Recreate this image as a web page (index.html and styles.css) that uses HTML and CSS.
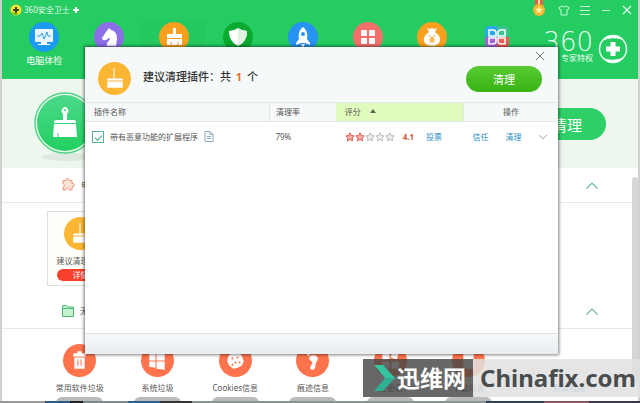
FILE: index.html
```html
<!DOCTYPE html>
<html lang="zh-CN">
<head>
    <meta charset="UTF-8">
    <title>360安全卫士</title>
    <link rel="stylesheet" href="styles.css">
</head>
<body>
    <!-- shared icons -->
    <svg class="defs" width="0" height="0">
        <symbol id="broom" viewBox="0 0 32 32">
            <path fill="#fff" d="M15 6h1v10h8v3H9v-3h6zM9 19h15v6H9z"/>
            <path fill="none" stroke="#f5b53a" d="M9 18.500h15"/>
        </symbol>
        <symbol id="up" viewBox="0 0 12 7">
            <path fill="none" stroke="#69bd9c" stroke-width="1.2" d="M.5 6.5L6 1l5.500 5.500"/>
        </symbol>
        <symbol id="star" viewBox="0 0 12 12">
            <path stroke-width="1.200" d="M6 1l1.500 3.200 3.500.5-2.600 2.400.7 3.500L6 8.900l-3.100 1.700.7-3.500L1 4.700l3.500-.5z"/>
        </symbol>
    </svg>

    <div class="window">
        <div class="header">
            <div class="titlebar">
                <div class="title">
                    <svg width="12" height="12" viewBox="0 0 12 12"><circle cx="6" cy="6" r="5.500" fill="#f3e52c"/><path d="M1 8a5.500 5.500 0 0 0 8 2z" fill="#5bbd1f"/><path d="M6 3v6M3 6h6" stroke="#3b4414" stroke-width="2"/></svg>
                    <span>360安全卫士</span>
                    <svg width="8" height="8" viewBox="0 0 8 8"><path d="M4 1v6M1 4h6" stroke="#fff" stroke-width="2"/></svg>
                </div>
                <div class="tools">
                    <svg width="14" height="18" viewBox="0 0 14 18"><path d="M3 0h8v5H3z" fill="#e9604a"/><path d="M6 0h2v5H6z" fill="#ffd9a0"/><circle cx="7" cy="10" r="6" fill="#f6b62e"/><path d="M7 6l1.200 2.600 2.800.3-2.100 1.900.6 2.800L7 12.200l-2.500 1.400.6-2.800L3 8.900l2.800-.3z" fill="#fff3a6"/></svg>
                    <svg width="12" height="12" viewBox="0 0 12 12"><path d="M4 2L1 3.500 2 6l1-.4V11h6V5.600l1 .4 1-2.500L8 2Q6 4 4 2z" fill="none" stroke="#c9f5da"/></svg>
                    <svg width="12" height="12" viewBox="0 0 12 12"><path d="M1 2.500h10M1 6.500h10M1 10.500h10" stroke="#c9f5da"/></svg>
                    <svg width="12" height="12" viewBox="0 0 12 12"><path d="M2 6.500h8" stroke="#c9f5da"/></svg>
                    <svg width="12" height="12" viewBox="0 0 12 12"><path d="M2 2l8 8M10 2l-8 8" stroke="#e6fbee" stroke-width="1.200"/></svg>
                </div>
            </div>
            <div class="menu">
                <div class="nav">
                    <a href="#" aria-label="电脑体检">
                        <svg viewBox="0 0 30 30"><circle cx="15" cy="15" r="15" fill="#1b9af0"/><rect x="6" y="7" width="18" height="13" rx="1" fill="#e9f6ff"/><path d="M12 20h6v2h3v1H9v-1h3z" fill="#fff"/><path d="M8 14h3l2-3 2 6 3-7 1 4h3" fill="none" stroke="#2d9de8"/></svg>
                        <span>电脑体检</span>
                    </a>
                    <a href="#" aria-label="木马查杀">
                        <svg viewBox="0 0 30 30"><circle cx="15" cy="15" r="15" fill="#8c6fe6"/><path d="M13 24c-1-4 3-5 3-8-2 0-3 2-5 2-2 1-3-1-3-2l4-6 3-4 2 2c5 1 6 5 6 9l-1 7z" fill="#fff"/></svg>
                    </a>
                    <a href="#" class="active" aria-label="电脑清理">
                        <svg viewBox="0 0 30 30"><circle cx="15" cy="15" r="15" fill="#fba01c"/><path d="M14 6h3v6h6v4H8v-4h6zM8 17h15v6H8z" fill="#fff"/><path d="M12 20v3M19 20v3" stroke="#fba01c"/></svg>
                    </a>
                    <a href="#" aria-label="系统修复">
                        <svg viewBox="0 0 30 30"><circle cx="15" cy="15" r="15" fill="#0aa92f"/><path d="M15 6q4 3 9 3c0 7-3 12-9 15-6-3-9-8-9-15q5 0 9-3z" fill="#fff"/><path d="M15 6q4 3 9 3c0 7-3 12-9 15z" fill="#dff3e3"/></svg>
                    </a>
                    <a href="#" aria-label="优化加速">
                        <svg viewBox="0 0 30 30"><circle cx="15" cy="15" r="15" fill="#2793f5"/><path d="M15 5c4 3 5 8 4 12l3 4v2l-5-2h-4l-5 2v-2l3-4c-1-4 0-9 4-12zM13 22h4l-2 4z" fill="#fff"/><circle cx="15" cy="12" r="2" fill="#2793f5"/></svg>
                    </a>
                    <a href="#" aria-label="功能大全">
                        <svg viewBox="0 0 30 30"><circle cx="15" cy="15" r="15" fill="#f3706a"/><g fill="#fff"><rect x="8" y="8" width="6" height="6" rx="1"/><rect x="16" y="8" width="6" height="6" rx="1"/><rect x="8" y="16" width="6" height="6" rx="1"/><rect x="16" y="16" width="6" height="6" rx="1"/></g></svg>
                    </a>
                    <a href="#" aria-label="省钱">
                        <svg viewBox="0 0 30 30"><circle cx="15" cy="15" r="15" fill="#fba01c"/><path d="M10 6l3 1 2-1 2 1 3-1-2 4c9 6 5 14-3 14S3 16 12 10z" fill="#fff"/><path d="M12 13l3 3 3-3M15 16v5M12 17h6M12 19h6" fill="none" stroke="#fba01c"/></svg>
                    </a>
                    <a href="#" aria-label="软件管家">
                        <svg viewBox="0 0 30 30"><path d="M3 8q0-4 4-4h8v11H3z" fill="#28a9e9"/><path d="M15 4h8q4 0 4 4v7H15z" fill="#3bc48f"/><path d="M3 15h12v11H7q-4 0-4-4z" fill="#a165d8"/><path d="M15 15h12v7q0 4-4 4h-8z" fill="#f05a50"/><path d="M14 14H7V8h4q3 0 3 3zM16 14h7V8h-4q-3 0-3 3zM14 16H7v6h4q3 0 3-3zM16 16h7v6h-4q-3 0-3-3z" fill="none" stroke="#fff" stroke-width="1.500"/></svg>
                    </a>
                </div>
                <div class="brand">
                    <div class="brand-text">
                        <b>360</b>
                        <span>专家特权</span>
                    </div>
                    <svg width="30" height="30" viewBox="0 0 30 30"><circle cx="15" cy="15" r="13.500" fill="none" stroke="#e9fcf0" stroke-width="1.500"/><path d="M5 6A13.500 13.500 0 0 1 24 5Q14 2 5 6zM25 24A13.500 13.500 0 0 1 6 25q10 3 19-1z" fill="#fff" stroke="#fff"/><path d="M15 8v14M8 15h14" stroke="#fff" stroke-width="5"/></svg>
                </div>
            </div>
        </div>

        <div class="hero">
            <svg width="64" height="72" viewBox="0 0 64 72">
                <defs><linearGradient id="g" x2="0" y2="1"><stop offset="0" stop-color="#4cd98a"/><stop offset="1" stop-color="#22cf60"/></linearGradient></defs>
                <ellipse cx="34" cy="65" rx="26" ry="4" fill="#e0e9e0"/>
                <circle cx="32" cy="31" r="30" fill="none" stroke="#52d68a" stroke-width="1.500"/>
                <circle cx="32" cy="31" r="28" fill="url(#g)"/>
                <path d="M30 28v-6q-3-3 0-6 2-2 4 0 3 3 0 6v6h7q2 0 2 3H21q0-3 2-3zM21 32h22l1 13H20z" fill="#fff"/>
                <path d="M25 41v4" stroke="#3bcf73"/><circle cx="32" cy="18" r="1" fill="#35cf70"/>
            </svg>
            <button class="clean-all">清理</button>
        </div>

        <div class="section">
            <div class="section-head">
                <svg width="15" height="14" viewBox="0 0 15 14"><path d="M2 2.500h3C4 0 9 0 8 2.500h3v3c3-1 3 4 0 3v3.500H8c1-2.500-4-2.500-3 0H2V9c2 0 2-3 0-3z" fill="#fbe3da" stroke="#ee9478"/></svg>
                <span>电</span>
                <svg class="fold" width="12" height="7"><use href="#up"/></svg>
            </div>
            <div class="plugins">
                <div class="card">
                    <svg class="round yellow"><use href="#broom"/></svg>
                    <p>建议清理插件</p>
                    <button>详情</button>
                </div>
            </div>
        </div>

        <div class="section">
            <div class="section-head">
                <svg width="14" height="12" viewBox="0 0 14 12"><path d="M1.500 11.500v-11h4l1 1.500h6v9.500zM1.500 3.500h11" fill="#c5f3d2" stroke="#4fb777"/></svg>
                <span>无</span>
                <svg class="fold" width="12" height="7"><use href="#up"/></svg>
            </div>
            <div class="rubbish">
                <div class="item">
                    <svg class="round" viewBox="0 0 32 32"><path d="M10 9h4V7h4v2h4v3H10zM11 13h10v11H11z" fill="#fff"/><path d="M14.500 15v6M17.500 15v6" stroke="#ff744c"/></svg>
                    <p>常用软件垃圾</p><i></i>
                </div>
                <div class="item">
                    <svg class="round" viewBox="0 0 32 32"><path d="M8 10l6-1v7H8zM15 9l8-1v8h-8zM8 17h6v6l-6-1zM15 17h8v8l-8-1z" fill="#fff"/></svg>
                    <p>系统垃圾</p><i></i>
                </div>
                <div class="item">
                    <svg class="round" viewBox="0 0 32 32"><path d="M16 8l3 1 3 2 1 3 1 3-2 4-4 2-4 1-4-3-2-4 1-5 3-3z" fill="#fff"/><g fill="#ff744c"><circle cx="13" cy="14" r="1"/><circle cx="18" cy="13" r="1"/><circle cx="16" cy="18" r="1"/><circle cx="20" cy="18" r="1"/><circle cx="13" cy="20" r="1"/></g></svg>
                    <p>Cookies信息</p><i></i>
                </div>
                <div class="item">
                    <svg class="round" viewBox="0 0 32 32"><path d="M13 12q5-3 8 1c1 3-2 4-2 7s-1 5-3 5-3-2-1-5 0-3-2-5z" fill="#fff"/><g fill="#fff"><circle cx="12" cy="10" r="1.500"/><circle cx="15" cy="8" r="1.500"/><circle cx="19" cy="8" r="1.500"/></g></svg>
                    <p>痕迹信息</p><i></i>
                </div>
                <div class="item">
                    <svg class="round" viewBox="0 0 32 32"><path d="M8 9h7v6H8zM18 7l6 2-2 6-6-2zM8 17h7v7H8zM17 17h7v7h-7z" fill="#fff"/></svg>
                    <p>注册表</p><i></i>
                </div>
                <div class="item">
                    <svg class="round" viewBox="0 0 32 32"><path d="M11 8h10v16H11z" fill="#fff"/></svg>
                    <p>下载垃圾</p><i></i>
                </div>
                <a href="#" class="more">默认勾选</a>
            </div>
        </div>
        <div class="scrollbar"></div>
    </div>
    <div class="desktop"></div>

    <div class="dialog">
        <div class="dialog-head">
            <svg class="round yellow"><use href="#broom"/></svg>
            <h1>建议清理插件：共 <em>1</em> 个</h1>
            <button class="clean">清理</button>
            <button class="close" aria-label="关闭"><svg width="10" height="10" viewBox="0 0 10 10"><path d="M1 1l8 8M9 1L1 9" stroke="#777"/></svg></button>
        </div>
        <table>
            <thead>
                <tr>
                    <th class="col-name">插件名称</th>
                    <th class="col-rate">清理率</th>
                    <th class="col-score">评分 <svg width="6" height="4" viewBox="0 0 6 4"><path d="M0 4l3-4 3 4z" fill="#5a6b50"/></svg></th>
                    <th class="col-action">操作</th>
                </tr>
            </thead>
            <tbody>
                <tr>
                    <td>
                        <label class="plugin">
                            <input type="checkbox" checked>
                            <span>带有恶意功能的扩展程序</span>
                            <svg width="10" height="11" viewBox="0 0 10 11"><path d="M1 .5h5l3 3v7H1zM6 .5v3h3M3 5.500h4M3 7.500h4" fill="none" stroke="#8fa9bd"/></svg>
                        </label>
                    </td>
                    <td class="rate">79%</td>
                    <td>
                        <div class="score">
                            <div class="stars">
                                <svg class="on"><use href="#star"/></svg>
                                <svg class="on"><use href="#star"/></svg>
                                <svg><use href="#star"/></svg>
                                <svg><use href="#star"/></svg>
                                <svg><use href="#star"/></svg>
                            </div>
                            <b>4.1</b>
                            <a href="#">投票</a>
                        </div>
                    </td>
                    <td>
                        <div class="actions">
                            <a href="#">信任</a>
                            <a href="#">清理</a>
                            <svg width="10" height="6" viewBox="0 0 10 6"><path d="M1 1l4 4 4-4" fill="none" stroke="#aaa"/></svg>
                        </div>
                    </td>
                </tr>
            </tbody>
        </table>
        <div class="dialog-foot"></div>
    </div>

    <div class="watermark">
        <div class="wm-name">
            <svg width="22" height="28" viewBox="0 0 22 28"><path d="M0 1h9l12 13H11z" fill="#35c4a0"/><path d="M11 14h10L9 27H0z" fill="#2fae93"/></svg>
            <span>迅维网</span>
        </div>
        <div class="wm-site">Chinafix.com</div>
    </div>
</body>
</html>
```

FILE: styles.css
```css
* {
    box-sizing: border-box;
}
body {
    margin: 0;
    height: 100vh;
    display: flex;
    flex-direction: column;
    overflow: hidden;
    position: relative;
    background: #cfd1cf;
    font-family: "Noto Sans", "Noto Sans CJK SC", sans-serif;
    font-size: 8px;
    line-height: 12px;
    color: #555;
}
p, h1 {
    margin: 0;
}
a {
    color: #2b8fc4;
    text-decoration: none;
}
button {
    border: none;
    padding: 0;
    font-family: inherit;
    color: #fff;
    cursor: pointer;
}
svg {
    display: block;
    flex: none;
}
.defs {
    position: absolute;
}
.round {
    width: 33px;
    height: 33px;
    border-radius: 50%;
    background: #ff744c;
}
.round.yellow {
    background: #fbb634;
}

/* main window */
.window {
    position: relative;
    flex: 1;
    min-height: 0;
    margin: 0 2px;
    overflow: hidden;
    background: #fff;
}
.header {
    height: 79px;
    background: #25cc62;
}
.titlebar {
    display: flex;
    justify-content: space-between;
    height: 20px;
    padding: 0 5px 0 8px;
}
.title, .tools {
    display: flex;
    align-items: center;
}
.title {
    gap: 2px;
    color: #e6fbee;
}
.tools {
    gap: 9px;
}
.tools svg:first-child {
    align-self: flex-start;
    margin-right: 3px;
}
.menu {
    display: flex;
    justify-content: space-between;
    padding: 0 10px;
}
.nav {
    width: 84%;
    display: grid;
    grid-template-columns: repeat(8, 1fr);
}
.nav a {
    display: flex;
    flex-direction: column;
    align-items: center;
    gap: 3px;
    height: 52px;
    padding-top: 2px;
    font-size: 9px;
    color: #fff;
}
.nav a.active {
    background: #24c860;
}
.nav svg {
    width: 30px;
    height: 30px;
}
.brand {
    display: flex;
    align-items: flex-start;
    gap: 5px;
    padding-top: 14px;
}
.brand-text {
    display: flex;
    flex-direction: column;
    align-items: flex-end;
    gap: 2px;
    width: 56px;
    color: #eefcf3;
}
.brand-text b {
    font-family: "DejaVu Sans", sans-serif;
    font-weight: 200;
    font-size: 26px;
    line-height: 16px;
}
.hero {
    display: flex;
    justify-content: space-between;
    align-items: flex-start;
    height: 89px;
    padding: 13px 32px 0 31px;
    background: #edf7ee;
}
.clean-all {
    width: 94px;
    height: 32px;
    margin-top: 16px;
    border-radius: 16px;
    padding-left: 16px;
    font-size: 15px;
    background: #2fd067;
}

/* sections */
.section-head {
    display: flex;
    align-items: center;
    gap: 5px;
    height: 35px;
    padding: 0 40px 0 59px;
    border-bottom: 1px solid #e8eae8;
}
.fold {
    margin-left: auto;
}
.plugins {
    padding: 8px 45px;
}
.card {
    display: flex;
    flex-direction: column;
    align-items: center;
    width: 67px;
    height: 75px;
    padding-top: 5px;
    border: 1px solid #ddd;
    background: #fffefa;
}
.card p {
    margin: 5px 0 2px;
}
.card button {
    width: 48px;
    height: 12px;
    border-radius: 6px;
    font-size: 8px;
    line-height: 12px;
    background: #f9402c;
}
.rubbish {
    display: grid;
    grid-template-columns: repeat(7, 1fr);
    padding: 15px 53px 0 39px;
}
.item {
    display: flex;
    flex-direction: column;
    align-items: center;
    white-space: nowrap;
}
.item p {
    margin: 5px 0 3px;
}
.item i {
    width: 47px;
    height: 12px;
    border-radius: 6px;
    background: #bbb;
}
.more {
    align-self: start;
    padding-top: 38px;
    text-align: right;
}
.scrollbar {
    position: absolute;
    top: 177px;
    right: 0;
    bottom: 16px;
    width: 6px;
    border-radius: 3px;
    background: #d6d6d6;
}
.desktop {
    height: 2px;
    background: linear-gradient(90deg, #999 7%, #2b5a86 7% 11%, #222 11% 13%, #7d8a8c 13% 20%, #28618f 20% 25%, #333 25% 30%, #8b9393 30% 76%, #314057 76% 85%, #8a5560 85% 92%, #3a3550 92%);
}

/* plugin dialog */
.dialog {
    position: absolute;
    top: 47px;
    left: 85px;
    right: 82px;
    bottom: 49px;
    display: flex;
    flex-direction: column;
    background: #fff;
    box-shadow: 0 0 3px 1px rgba(0,0,0,0.5);
}
.dialog-head {
    position: relative;
    display: flex;
    align-items: center;
    gap: 12px;
    height: 55px;
    padding: 8px 16px 0 13px;
    background: #f6f9f9;
}
.dialog-head h1 {
    padding-bottom: 3px;
    font-size: 11px;
    font-weight: 500;
    line-height: 16px;
    color: #333;
}
.dialog-head em {
    margin: 0 2px;
    font-style: normal;
    font-weight: bold;
    color: #e0702a;
}
.clean {
    width: 76px;
    height: 26px;
    margin-left: auto;
    border-radius: 13px;
    font-size: 11px;
    background: linear-gradient(#5bcb33, #35b411);
}
.close {
    position: absolute;
    top: 4px;
    right: 13px;
    background: none;
}
table {
    width: 100%;
    table-layout: fixed;
    border-collapse: collapse;
}
th, td {
    padding: 0 0 0 9px;
    text-align: left;
    font-weight: normal;
}
th {
    height: 19px;
    border-top: 1px solid #e1e7e7;
    border-bottom: 1px solid #e1e7e7;
    background: #f6f9f9;
}
th svg {
    display: inline;
    margin: 0 0 2px 7px;
}
.col-rate, .col-action {
    border-left: 1px solid #e1e7e7;
}
.col-name {
    width: 39%;
}
.col-rate {
    width: 14%;
}
.col-rate, .rate {
    padding-left: 6px;
}
.col-score {
    width: 27%;
    background: #e1fbbd;
}
.col-action {
    padding: 0;
    text-align: center;
}
td {
    height: 30px;
}
td:first-child {
    padding-left: 7px;
}
.plugin, .score, .actions {
    display: flex;
    align-items: center;
}
.plugin {
    gap: 6px;
}
.plugin input {
    appearance: none;
    width: 12px;
    height: 12px;
    margin: 0;
    border: 1px solid #58b29a;
    background: #fff;
    display: grid;
    place-items: center;
}
.plugin input:checked::before {
    content: "";
    width: 6px;
    height: 3px;
    border: solid #43a58a;
    border-width: 0 0 1px 1px;
    transform: rotate(-45deg);
}
.stars {
    display: flex;
}
.stars svg {
    width: 10px;
    height: 10px;
    fill: #eee;
    stroke: #bbb;
}
.stars .on {
    fill: #f9b0aa;
    stroke: #e2574f;
}
.score b {
    margin: 0 12px 0 8px;
    color: #d2583c;
}
.actions {
    gap: 17px;
}
.dialog-foot {
    height: 21px;
    margin-top: auto;
    border-top: 1px solid #dfe3e5;
    background: linear-gradient(#f6f8f9, #e9edf0);
}

/* site watermark */
.watermark {
    position: absolute;
    right: 0;
    bottom: 6px;
    display: flex;
    height: 38px;
    line-height: 38px;
    font-weight: bold;
}
.wm-name {
    display: flex;
    align-items: center;
    gap: 1px;
    width: 110px;
    padding-left: 11px;
    font-size: 23px;
    color: #fff;
    background: rgba(70,70,70,0.82);
}
.wm-site {
    width: 167px;
    padding-left: 7px;
    font-family: "Noto Sans", sans-serif;
    font-size: 24px;
    color: #4a4c4e;
    background: rgba(224,224,224,0.85);
}
```
